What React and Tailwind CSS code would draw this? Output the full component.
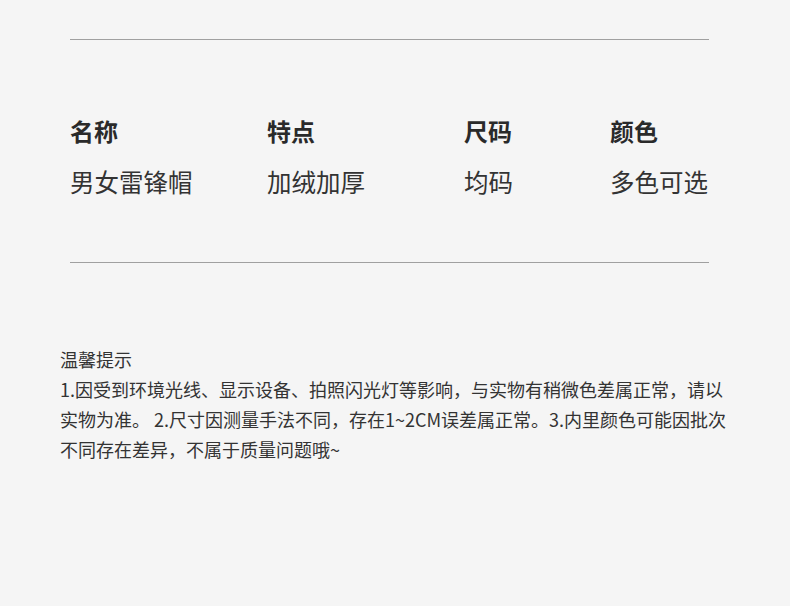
import React from 'react';

const specs = [
  { label: '名称', value: '男女雷锋帽' },
  { label: '特点', value: '加绒加厚' },
  { label: '尺码', value: '均码' },
  { label: '颜色', value: '多色可选' },
];

export default function App() {
  return (
    <div
      className="w-[790px] h-[606px] bg-[#f5f5f5] text-[#333] overflow-hidden"
      style={{ fontFamily: '"Noto Sans CJK SC", "Noto Sans", sans-serif' }}
    >
      {/* Spec table */}
      <div className="pt-[39px] pl-[70px]">
        <div className="h-px w-[639px] bg-[#a0a0a0]" />

        <div className="mt-[75px] grid grid-cols-[197px_197px_146px_1fr] gap-y-[19px]">
          {specs.map((s) => (
            <div key={s.label} className="text-[24px] leading-[32px] font-bold text-[#2a2a2a]">
              {s.label}
            </div>
          ))}
          {specs.map((s) => (
            <div key={s.value} className="text-[24.5px] leading-[32px] text-[#333]">
              {s.value}
            </div>
          ))}
        </div>

        <div className="mt-[64px] h-px w-[639px] bg-[#a0a0a0]" />
      </div>

      {/* Notes */}
      <div className="mt-[81px] pl-[60px] w-[732px] text-[18px] leading-[30px] text-[#333]">
        <p>温馨提示</p>
        <p>
          1.因受到环境光线、显示设备、拍照闪光灯等影响，与实物有稍微色差属正常，请以实物为准。 2.尺寸因测量手法不同，存在1~2CM误差属正常。3.内里颜色可能因批次不同存在差异，不属于质量问题哦~
        </p>
      </div>
    </div>
  );
}
